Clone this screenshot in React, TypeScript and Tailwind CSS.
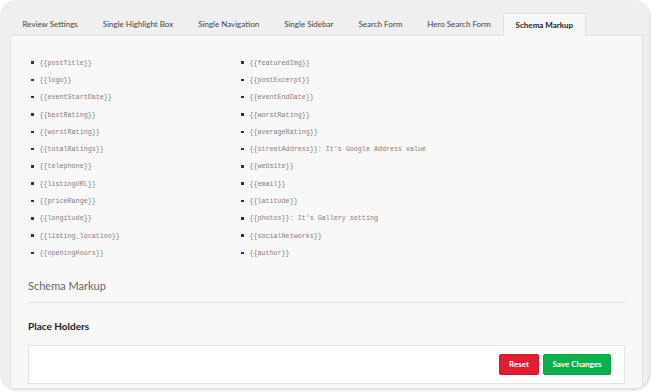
import React from 'react'

const tabs = [
  'Review Settings',
  'Single Highlight Box',
  'Single Navigation',
  'Single Sidebar',
  'Search Form',
  'Hero Search Form',
  'Schema Markup',
]

const leftCol = [
  '{{postTitle}}',
  '{{logo}}',
  '{{eventStartDate}}',
  '{{bestRating}}',
  '{{worstRating}}',
  '{{totalRatings}}',
  '{{telephone}}',
  '{{listingURL}}',
  '{{priceRange}}',
  '{{longitude}}',
  '{{listing_location}}',
  '{{openingHours}}',
]

const rightCol = [
  '{{featuredImg}}',
  '{{postExcerpt}}',
  '{{eventEndDate}}',
  '{{worstRating}}',
  '{{averageRating}}',
  "{{streetAddress}}: It's Google Address value",
  '{{website}}',
  '{{email}}',
  '{{latitude}}',
  "{{photos}}: It's Gallery setting",
  '{{socialNetworks}}',
  '{{author}}',
]

function Column({ items, width }: { items: string[]; width: string }) {
  return (
    <ul className={width}>
      {items.map((t, i) => (
        <li key={i} className="flex items-center h-[17.3px]">
          <span className="w-[2.5px] h-[2.5px] bg-[#333] ml-[3px] mr-[6px] flex-shrink-0" />
          <span className="text-[6.7px] text-[#808080] whitespace-nowrap" style={{ fontFamily: '"Liberation Mono", monospace' }}>
            {t}
          </span>
        </li>
      ))}
    </ul>
  )
}

export default function App() {
  const active = 'Schema Markup'
  return (
    <div className="w-[653px] h-[392px] bg-white" style={{ fontFamily: 'Lato, "Liberation Sans", sans-serif' }}>
      <div className="w-[649px] h-[389px] rounded-[16px] bg-[#efefef] overflow-hidden flex flex-col shadow-[1px_1px_3px_rgba(0,0,0,0.18)]">
        <div className="flex items-end h-[35px] pl-[10px] flex-shrink-0">
          {tabs.map((t) => {
            const isActive = t === active
            return (
              <div
                key={t}
                className={
                  isActive
                    ? 'h-[23px] px-[11.5px] flex items-center text-[8px] font-bold text-[#222] bg-[#f8f8f8] border border-b-0 border-[#e1e1e1] -mb-px relative'
                    : 'h-[23px] px-[11.5px] flex items-center text-[8px] text-[#444] border border-transparent'
                }
              >
                {t}
              </div>
            )
          })}
        </div>
        <div className="flex-1 ml-[10px] mr-[6px] bg-[#f8f8f8] border border-[#e3e3e3] px-[17px] pt-[18px]">
          <div className="flex">
            <Column items={leftCol} width="w-[210px]" />
            <Column items={rightCol} width="flex-1" />
          </div>
          <div className="mt-[16px] pb-[8px] border-b border-[#e4e4e4] text-[11px] leading-[16px] text-[#666]">
            Schema Markup
          </div>
          <div className="mt-[16px] text-[10px] leading-[14px] font-bold text-[#222]">Place Holders</div>
          <div className="mt-[12px] h-[39px] bg-white border border-[#e2e2e2] flex items-center justify-end pr-[13px] gap-[4px]">
            <button className="w-[40px] h-[21px] rounded-[2px] bg-[#e21f30] border border-[#d01a2a] text-white text-[8px] font-bold">
              Reset
            </button>
            <button className="w-[68px] h-[21px] rounded-[2px] bg-[#0db14b] border border-[#0aa544] text-white text-[8px] font-bold">
              Save Changes
            </button>
          </div>
        </div>
      </div>
    </div>
  )
}
